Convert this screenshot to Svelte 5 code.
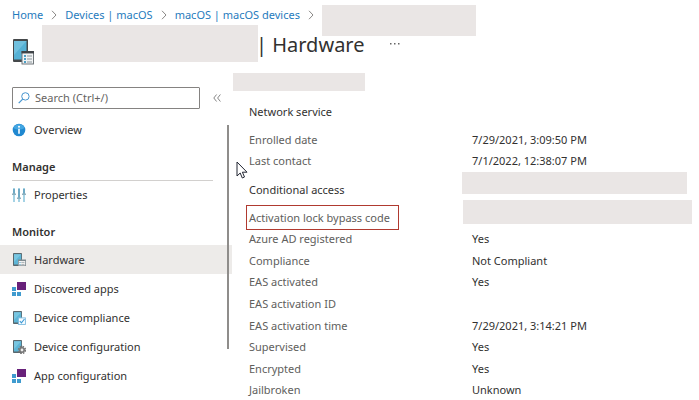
<script>
  const manage = [{ label: 'Properties', icon: 'sliders' }];
  const monitor = [
    { label: 'Hardware', icon: 'list', active: true },
    { label: 'Discovered apps', icon: 'apps' },
    { label: 'Device compliance', icon: 'check' },
    { label: 'Device configuration', icon: 'gear' },
    { label: 'App configuration', icon: 'apps' }
  ];
  const network = [
    { label: 'Enrolled date', value: '7/29/2021, 3:09:50 PM' },
    { label: 'Last contact', value: '7/1/2022, 12:38:07 PM' }
  ];
  const access = [
    { label: 'Activation lock bypass code', value: '', masked: true },
    { label: 'Azure AD registered', value: 'Yes' },
    { label: 'Compliance', value: 'Not Compliant' },
    { label: 'EAS activated', value: 'Yes' },
    { label: 'EAS activation ID', value: '' },
    { label: 'EAS activation time', value: '7/29/2021, 3:14:21 PM' },
    { label: 'Supervised', value: 'Yes' },
    { label: 'Encrypted', value: 'Yes' },
    { label: 'Jailbroken', value: 'Unknown' }
  ];
  let query = $state('');
</script>

{#snippet chevron()}
  <svg class="chevron" viewBox="0 0 6 10" aria-hidden="true"><path d="M1 .8 5 5 1 9.2" fill="none" stroke="#8a8886" /></svg>
{/snippet}

{#snippet glyph(kind)}
  <svg class="glyph" viewBox="0 0 14 14" aria-hidden="true">
    {#if kind === 'info'}
      <circle cx="7" cy="7" r="6.3" fill="#2088d0" />
      <path d="M1.2 5A6.3 6.3 0 0 1 12.8 5Q7 8 1.2 5" fill="#43a6e2" />
      <path d="M6.2 5.8h1.6v5H6.2z" fill="#fff" />
      <circle cx="7" cy="3.7" r="1" fill="#fff" />
    {:else if kind === 'sliders'}
      <path d="M1 0h2v14H1zM6 0h2v14H6zM11 0h2v14h-2z" fill="#a5d3e5" />
      <path d="M1 1h2v5H1zM6 1h2v9H6zM11 1h2v5h-2z" fill="#6faac5" />
      <path d="M0 5.5h4v1.6H0zM5 9.5h4v1.6H5zM10 5.5h4v1.6h-4z" fill="#8fb0be" />
    {:else if kind === 'apps'}
      <path d="M5 0h9v8H5z" fill="#68217a" />
      <path d="M0 5h4v4H0zM0 10h4v4H0zM5 10h4v4H5z" fill="#3f9bcf" />
    {:else}
      <rect x="1" y="0" width="9" height="13" rx=".8" fill="#59676d" />
      <rect x="2" y="1.3" width="7.2" height="10.2" fill="#5db5d6" />
      <path d="M2 1.3h7.2L2 9z" fill="#78c6e1" />
      {#if kind === 'list'}
        <path d="M6 6.5h8V13H6z" fill="#7f8b90" />
        <path d="M6.8 8h6.4v4.3H6.8z" fill="#f5f5f5" />
        <path d="M7.5 9h1v1h-1zM7.5 11h1v1h-1z" fill="#3999c6" />
        <path d="M9.3 9.4h3.2M9.3 11.4h3.2" stroke="#8a9296" stroke-width=".7" />
      {:else if kind === 'check'}
        <rect x="6.4" y="6.9" width="7" height="6.5" fill="#f8fcff" stroke="#79b9df" stroke-width=".9" />
        <path d="m7.8 10 1.6 1.8L12.5 8" fill="none" stroke="#3999d6" stroke-width="1.1" />
      {:else}
        <circle cx="10" cy="10" r="3.4" fill="none" stroke="#777" stroke-width="1.6" stroke-dasharray="1.6 1.07" />
        <circle cx="10" cy="10" r="2.2" fill="#eee" stroke="#777" stroke-width="1.6" />
      {/if}
    {/if}
  </svg>
{/snippet}

{#snippet item(entry)}
  <li>
    <a class="item" class:active={entry.active} href="#blade" aria-current={entry.active ? 'page' : undefined}>
      {@render glyph(entry.icon)}<span>{entry.label}</span>
    </a>
  </li>
{/snippet}

{#snippet rows(list)}
  {#each list as row}
    <div class="row">
      <dt><span class:flagged={row.masked}>{row.label}</span></dt>
      <dd class:masked={row.masked}>{row.value}</dd>
    </div>
  {/each}
{/snippet}

<div class="page">
  <nav class="crumbs" aria-label="Breadcrumb">
    <a href="#home">Home</a>{@render chevron()}
    <a href="#devices">Devices | macOS</a>{@render chevron()}
    <a href="#macos">macOS | macOS devices</a>{@render chevron()}
    <span class="mask crumb-mask"></span>
  </nav>

  <header>
    <svg class="device" viewBox="0 0 22 26" aria-hidden="true">
      <rect x="1" y="0" width="15" height="23" rx="1" fill="#45484a" />
      <rect x="2" y="2" width="12.5" height="18.5" fill="#55b1d5" />
      <path d="M2 2h12.5L2 16z" fill="#70c0de" />
      <rect x="9.5" y="12" width="12.5" height="13.6" rx=".6" fill="#70777b" />
      <path d="M9.5 12h12.5v2.5H9.5z" fill="#3f4447" />
      <path d="M10.5 14.5h10.5v10H10.5z" fill="#f1f3f4" />
      <path d="M12 16h2v2h-2zM12 19h2v2h-2zM12 22h2v2h-2z" fill="#4c9fc6" />
      <path d="M15 17h5M15 20h5M15 23h5" stroke="#8b969b" />
    </svg>
    <span class="mask name-mask"></span>
    <h1>| Hardware</h1>
    <button class="more" aria-label="More actions">
      <svg viewBox="0 0 12 4" aria-hidden="true"><path d="M1 1h1.5v1.5H1zM5 1h1.5v1.5H5zM9 1h1.5v1.5H9z" fill="#666" /></svg>
    </button>
  </header>

  <div class="body">
    <aside>
      <div class="tools">
        <label class="search">
          <svg viewBox="0 0 12 12" aria-hidden="true"><circle cx="7.4" cy="4.4" r="3.7" fill="none" stroke="#4795cf" /><path d="M4.7 7.2.7 11.2" stroke="#4795cf" stroke-width="1.2" /></svg>
          <input type="text" aria-label="Search" placeholder="Search (Ctrl+/)" bind:value={query} />
        </label>
        <button class="collapse" aria-label="Collapse menu">
          <svg viewBox="0 0 8 8" aria-hidden="true"><path d="M3.6.5.8 4l2.8 3.5M7.4.5 4.6 4l2.8 3.5" fill="none" stroke="#777" stroke-width=".9" /></svg>
        </button>
      </div>
      <ul>{@render item({ label: 'Overview', icon: 'info' })}</ul>
      <h2>Manage</h2>
      <ul>{#each manage as entry}{@render item(entry)}{/each}</ul>
      <h2>Monitor</h2>
      <ul>{#each monitor as entry}{@render item(entry)}{/each}</ul>
      <span class="scrollbar"></span>
    </aside>

    <main>
      <span class="mask tab-mask"></span>
      <h3>Network service</h3>
      <dl>{@render rows(network)}</dl>
      <div class="heading">
        <h3>Conditional access</h3>
        <span class="mask heading-mask"></span>
      </div>
      <dl class="access">{@render rows(access)}</dl>
      <svg class="pointer" viewBox="0 0 12 18" aria-hidden="true">
        <path d="M1 1v14l3.2-3 2.1 5 2.2-1-2.1-4.8H11z" fill="#fff" stroke="#222633" />
      </svg>
    </main>
  </div>
</div>

<style>
  .page {
    height: 100vh;
    overflow: hidden;
    background: #fff;
    color: #323130;
    font: 11px/20px "Noto Sans", "Open Sans", sans-serif;
  }
  h1, h2, h3, ul, dl, dd { margin: 0; padding: 0; }
  ul { list-style: none; }
  a { color: inherit; text-decoration: none; }
  button { padding: 0; border: 0; background: none; }
  svg { display: block; flex: none; }
  .mask { display: block; background: #eae6e5; }

  .crumbs {
    display: flex;
    height: 20px;
    padding: 5px 12px 0;
    color: #1f7bbd;
    white-space: nowrap;
  }
  .chevron { width: 6px; height: 10px; margin: 5px 8px; }
  .crumb-mask { width: 154px; height: 31px; }

  header { display: flex; align-items: center; height: 37px; padding-left: 12px; }
  .device { width: 22px; height: 26px; margin-top: 16px; }
  .name-mask { width: 216px; height: 37px; margin-left: 8px; }
  h1 { margin: 3px 0 0 -2px; font-size: 20px; font-weight: 400; line-height: 28px; white-space: nowrap; }
  .more { margin-left: 24px; }
  .more svg { width: 12px; height: 4px; }

  .body { display: flex; padding-top: 11px; }
  aside { position: relative; flex: none; width: 232px; }
  .tools { display: flex; align-items: center; gap: 13px; padding: 14px 0 6px 12px; }
  .search {
    box-sizing: border-box;
    display: flex;
    align-items: center;
    width: 188px;
    height: 22px;
    padding-left: 5px;
    border: 1px solid #858381;
    border-radius: 1px;
  }
  .search svg { width: 12px; height: 12px; }
  input {
    flex: 1;
    min-width: 0;
    margin-left: 5px;
    padding: 0;
    border: 0;
    outline: 0;
    background: none;
    color: inherit;
    font: inherit;
  }
  input::placeholder { color: #666462; opacity: 1; }
  .collapse svg { width: 8px; height: 8px; }
  .item { display: flex; align-items: center; gap: 8px; height: 29px; padding-left: 12px; }
  .active { background: #edebe9; }
  .glyph { width: 14px; height: 14px; }
  h2 {
    margin: 0 19px 0 12px;
    padding: 11px 0 1px;
    border-bottom: 1px solid #d2d0ce;
    font-size: 11px;
    font-weight: 600;
    line-height: 24px;
  }
  h2 + ul { margin-top: -1px; }
  .scrollbar { position: absolute; left: 227px; top: 52px; width: 2px; height: 224px; background: #8f8d8b; }

  main { position: relative; flex: 1; min-width: 0; }
  .tab-mask { width: 132px; height: 18px; margin: 0 0 10px 1px; }
  h3 { padding-left: 17px; font-size: 11px; font-weight: 400; line-height: 22px; }
  dl { display: grid; grid-auto-rows: 1fr; padding: 6px 0 0 17px; }
  .row { display: flex; align-items: center; height: 100%; min-height: 21px; }
  dt { flex: none; width: 223px; color: #605e5c; }
  .heading { display: flex; padding-top: 8px; }
  .heading h3 { flex: none; box-sizing: border-box; width: 230px; }
  .heading-mask { flex: 1; height: 22px; margin: -7px 12px 0 0; }
  .access { height: 194px; padding-top: 6px; }
  .masked { flex: 1; height: 24px; margin: -12px 7px 0 -9px; background: #eae6e5; }
  .flagged { margin-left: -3px; padding: 4px 8px 4px 2px; border: 1px solid #b03a30; }
  .pointer { position: absolute; left: 4px; top: 88px; width: 12px; height: 18px; }
</style>
